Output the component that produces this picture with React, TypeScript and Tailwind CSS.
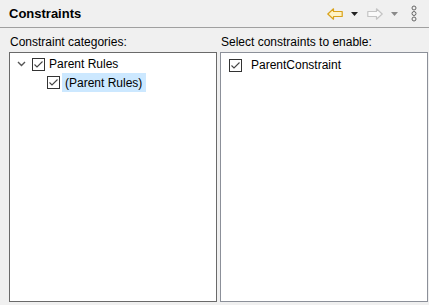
import type { ReactNode } from "react";

function CheckBox() {
  return (
    <svg width="13" height="13" viewBox="0 0 13 13" className="shrink-0">
      <rect x="0.5" y="0.5" width="12" height="12" fill="#fff" stroke="#333" />
      <path d="M2.5 6.5 L5 9 L10.5 3.5" fill="none" stroke="#444" strokeWidth="1.1" />
    </svg>
  );
}

function Chevron() {
  return (
    <svg width="9" height="6" viewBox="0 0 9 6" className="shrink-0">
      <path d="M1 1 L4.5 4.5 L8 1" fill="none" stroke="#555" strokeWidth="1.4" />
    </svg>
  );
}

function ArrowLeft({ fill, stroke }: { fill: string; stroke: string }) {
  return (
    <svg width="16" height="12" viewBox="0 0 16 12">
      <path
        d="M0.8 6 L6.5 0.8 L6.5 3.5 L15.2 3.5 L15.2 8.5 L6.5 8.5 L6.5 11.2 Z"
        fill={fill}
        stroke={stroke}
        strokeWidth="1.2"
        strokeLinejoin="round"
      />
    </svg>
  );
}

function DropTriangle({ color }: { color: string }) {
  return (
    <svg width="7" height="4" viewBox="0 0 7 4">
      <path d="M0 0 L7 0 L3.5 4 Z" fill={color} />
    </svg>
  );
}

function MoreDots() {
  return (
    <svg width="6" height="17" viewBox="0 0 6 17">
      <circle cx="3" cy="3" r="2" fill="none" stroke="#666" strokeWidth="1" />
      <circle cx="3" cy="8.5" r="2" fill="none" stroke="#666" strokeWidth="1" />
      <circle cx="3" cy="14" r="2" fill="none" stroke="#666" strokeWidth="1" />
    </svg>
  );
}

function Panel({ label, children, border }: { label: string; children: ReactNode; border: string }) {
  return (
    <div className="flex w-[208px] flex-col">
      <div className="h-[17px] pl-[1px] leading-[17px]">{label}</div>
      <div className={`mt-[1px] h-[250px] border bg-white ${border}`}>{children}</div>
    </div>
  );
}

export default function App() {
  return (
    <div
      className="h-[305px] w-[429px] overflow-hidden bg-[#f0f0f0] text-[12px] text-black"
      style={{ fontFamily: '"Liberation Sans", Arial, sans-serif' }}
    >
      <div className="flex h-[28px] items-center border-b border-[#a0a0a0] pl-[9px] pr-[12px]">
        <span className="text-[13px] font-bold">Constraints</span>
        <div className="ml-auto flex items-center">
          <ArrowLeft fill="#fff3c4" stroke="#d9a21b" />
          <span className="ml-[8px] flex"><DropTriangle color="#222" /></span>
          <span className="ml-[9px] flex -scale-x-100"><ArrowLeft fill="#fafafa" stroke="#c4c4c4" /></span>
          <span className="ml-[8px] flex"><DropTriangle color="#8a8a8a" /></span>
          <span className="ml-[13px] flex"><MoreDots /></span>
        </div>
      </div>
      <div className="flex gap-[3px] pl-[9px] pt-[6px]">
        <Panel label="Constraint categories:" border="border-[#6a6a6a]">
          <div className="flex flex-col pt-[2px]">
            <div className="flex h-[18px] items-center">
              <span className="ml-[7px] flex"><Chevron /></span>
              <span className="ml-[6px] flex"><CheckBox /></span>
              <span className="ml-[4px]">Parent Rules</span>
            </div>
            <div className="flex h-[19px] items-center">
              <span className="ml-[37px] flex"><CheckBox /></span>
              <span className="ml-[2px] flex h-[19px] items-center bg-[#cce8ff] pl-[3px] pr-[4px]">(Parent Rules)</span>
            </div>
          </div>
        </Panel>
        <Panel label="Select constraints to enable:" border="border-[#8c9099]">
          <div className="flex h-[18px] items-center pt-[2px] mt-[2px]">
            <span className="ml-[8px] flex"><CheckBox /></span>
            <span className="ml-[9px]">ParentConstraint</span>
          </div>
        </Panel>
      </div>
    </div>
  );
}
